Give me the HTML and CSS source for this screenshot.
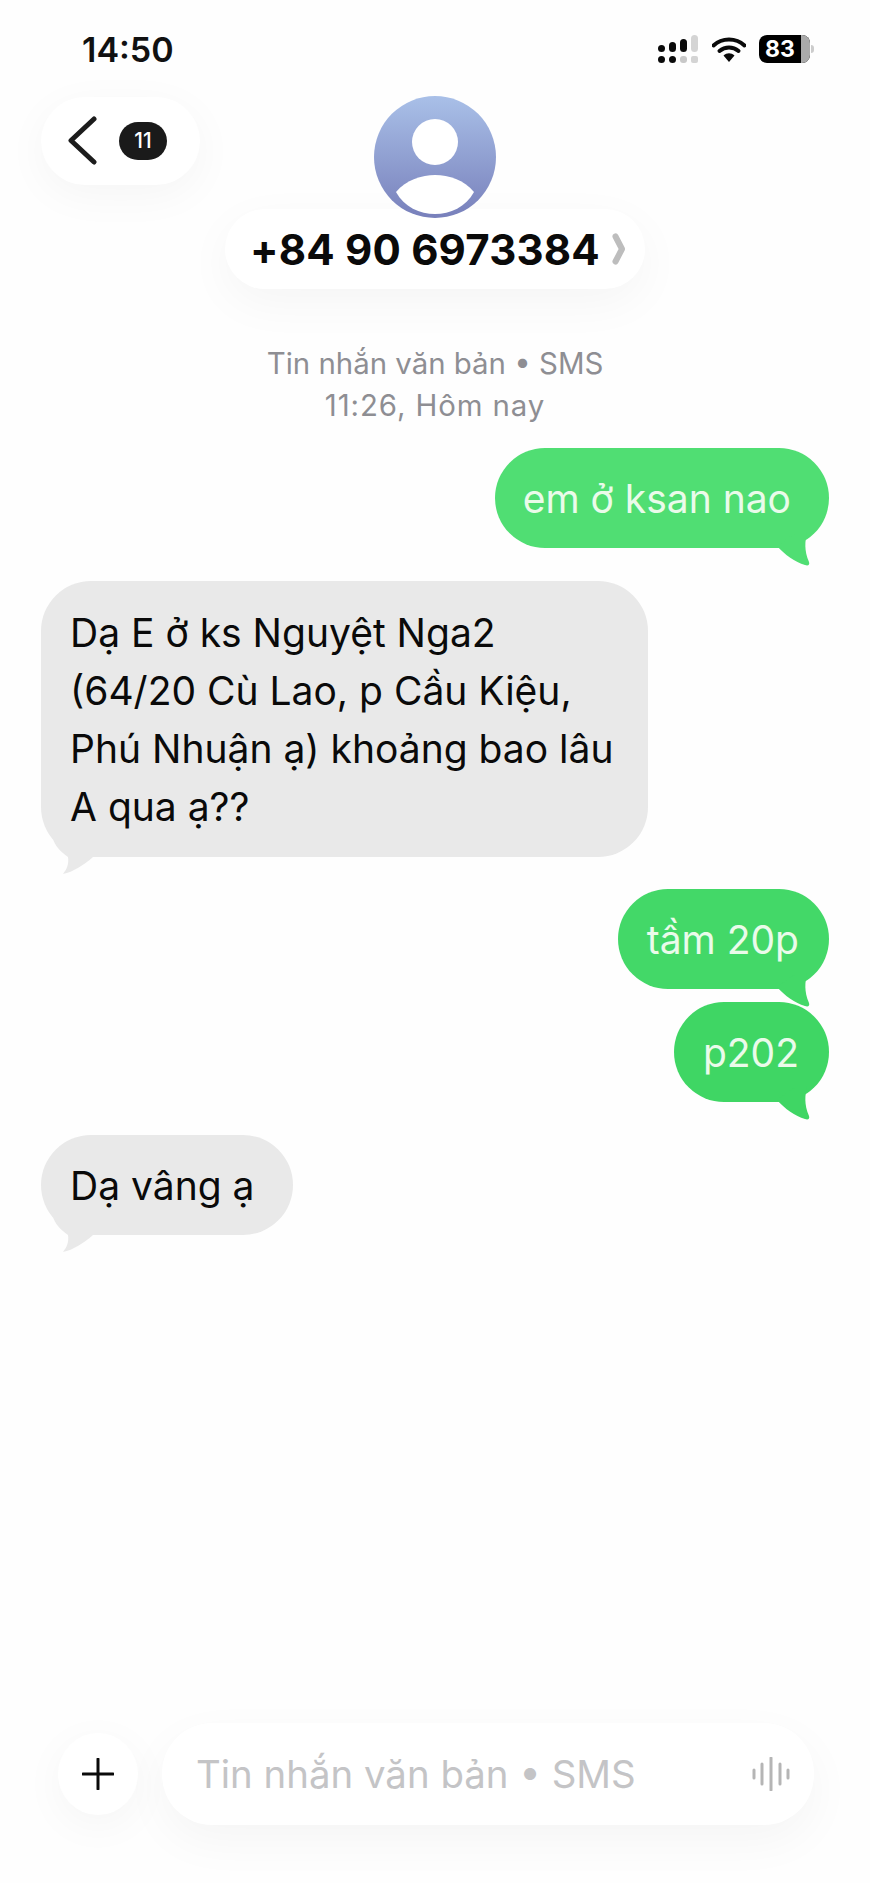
FILE: index.html
```html
<!DOCTYPE html>
<html lang="vi">

<head>
    <meta charset="UTF-8">
    <meta name="viewport" content="width=device-width, initial-scale=1.0">
    <title>Tin nhắn</title>
    <link rel="stylesheet" href="styles.css">
</head>

<body>
    <div class="statusBar">
        <span class="clock">14:50</span>
        <div class="statusIcons">
            <svg class="signal" width="42" height="28" viewBox="0 0 42 28">
                <rect x="0" y="10" width="7" height="7" rx="3.5" fill="#0a0a0a" />
                <rect x="11" y="7" width="7" height="10" rx="3.5" fill="#0a0a0a" />
                <rect x="22" y="4" width="7" height="13" rx="3.5" fill="#0a0a0a" />
                <rect x="33" y="0" width="7" height="17" rx="3.5" fill="#d4d4d4" />
                <rect x="0" y="21" width="7" height="7" rx="3.5" fill="#0a0a0a" />
                <rect x="11" y="21" width="7" height="7" rx="3.5" fill="#0a0a0a" />
                <rect x="22" y="21" width="7" height="7" rx="3" fill="#c8c8c8" />
                <rect x="33" y="21" width="7" height="7" rx="2" fill="#d4d4d4" />
            </svg>
            <svg class="wifi" width="34" height="26" viewBox="0 0 34 26">
                <path d="M1.5 9.5C10 1.5 24 1.5 32.5 9.5" fill="none" stroke="#0a0a0a" stroke-width="4" stroke-linecap="round" />
                <path d="M7.5 15C13 10.3 21 10.3 26.5 15" fill="none" stroke="#0a0a0a" stroke-width="4" stroke-linecap="round" />
                <path d="M11.5 19.5C15 16.6 19 16.6 22.5 19.5L17 26Z" fill="#0a0a0a" />
            </svg>
            <div class="battery">
                <span class="batteryLevel">83</span>
                <span class="batteryRest"></span>
            </div>
            <span class="batteryNub"></span>
        </div>
    </div>

    <div class="topBar">
        <div class="backPill">
            <svg width="30" height="50" viewBox="0 0 30 50">
                <path d="M27 3L4 24.500L27 46" fill="none" stroke="#1c1c1c" stroke-width="5" stroke-linecap="round" stroke-linejoin="round" />
            </svg>
            <span class="unread">11</span>
        </div>
        <div class="contact">
            <svg class="avatar" width="122" height="122" viewBox="0 0 122 122">
                <defs>
                    <linearGradient id="avatarFill" x1="0" y1="0" x2="0" y2="1">
                        <stop offset="0" stop-color="#a9c0e8" />
                        <stop offset="1" stop-color="#7880bb" />
                    </linearGradient>
                </defs>
                <circle cx="61" cy="61" r="61" fill="url(#avatarFill)" />
                <ellipse cx="61" cy="46" rx="23" ry="23" fill="#fff" />
                <path d="M22 96C32 84 48 79 61 79C75 79 90 84 100 96C92 111 76 118 61 118C46 118 30 111 22 96Z" fill="#fff" />
            </svg>
            <div class="namePill">
                <span class="phone">+84 90 6973384</span>
                <svg width="14" height="32" viewBox="0 0 14 32">
                    <path d="M3.500 3.500L10 16L3.500 28.500" fill="none" stroke="#bdbdbd" stroke-width="6" stroke-linecap="round" stroke-linejoin="round" />
                </svg>
            </div>
        </div>
    </div>

    <div class="threadInfo">
        <div>Tin nhắn văn bản • SMS</div>
        <div class="threadTime">11:26, Hôm nay</div>
    </div>

    <div class="messages">
        <div class="bubble sent shade1 first roomy">em ở ksan nao
            <svg class="tail" width="34" height="34" viewBox="0 0 34 34">
                <path d="M0 14L20 0L30 0C28 10 27 18 32 30C33 33 31 34 28 33C18 30 8 23 0 14Z" />
            </svg>
        </div>
        <div class="bubble received long">Dạ E ở ks Nguyệt Nga2<br>(64/20 Cù Lao, p Cầu Kiệu,<br>Phú Nhuận ạ) khoảng bao lâu<br>A qua ạ??
            <svg class="tail" width="54" height="40" viewBox="0 0 54 40">
                <path d="M12 0C14 7 20 13 27 18C28 25 26 30 22 35C32 33 43 26 52 18L30 0Z" />
            </svg>
        </div>
        <div class="bubble sent shade2">tầm 20p
            <svg class="tail" width="34" height="34" viewBox="0 0 34 34">
                <path d="M0 14L20 0L30 0C28 10 27 18 32 30C33 33 31 34 28 33C18 30 8 23 0 14Z" />
            </svg>
        </div>
        <div class="bubble sent shade3 tight">p202
            <svg class="tail" width="34" height="34" viewBox="0 0 34 34">
                <path d="M0 14L20 0L30 0C28 10 27 18 32 30C33 33 31 34 28 33C18 30 8 23 0 14Z" />
            </svg>
        </div>
        <div class="bubble received roomy">Dạ vâng ạ
            <svg class="tail" width="54" height="40" viewBox="0 0 54 40">
                <path d="M12 0C14 7 20 13 27 18C28 25 26 30 22 35C32 33 43 26 52 18L30 0Z" />
            </svg>
        </div>
    </div>

    <div class="composer">
        <div class="plusButton">
            <svg width="32" height="32" viewBox="0 0 32 32">
                <path d="M16 1V31M1 16H31" fill="none" stroke="#0a0a0a" stroke-width="3" stroke-linecap="round" />
            </svg>
        </div>
        <div class="inputPill">
            <span class="placeholder">Tin nhắn văn bản • SMS</span>
            <svg width="38" height="34" viewBox="0 0 38 34">
                <path d="M2 13V21M10 7V27M19 1V33M28 7V27M36 13V21" fill="none" stroke="#b5b5b5" stroke-width="3" stroke-linecap="round" />
            </svg>
        </div>
    </div>
</body>

</html>
```

FILE: styles.css
```css
* {
    box-sizing: border-box;
}

body {
    font-family: Inter, "Liberation Sans", sans-serif;
    width: 870px;
    height: 1883px;
    margin: 0;
    overflow: hidden;
    display: flex;
    flex-direction: column;
    background-color: #fefefe;
    color: #0a0a0a;
}

.statusBar {
    display: flex;
    justify-content: space-between;
    align-items: center;
    height: 28px;
    margin-top: 35px;
    padding: 0 56px 0 82px;
}

.clock {
    font-size: 34px;
    font-weight: 600;
    color: #111;
}

.statusIcons {
    display: flex;
    align-items: center;
}

.wifi {
    margin-left: 12px;
}

.battery {
    display: flex;
    width: 51px;
    height: 28px;
    margin-left: 13px;
    border-radius: 8px;
    overflow: hidden;
    background-color: #000;
}

.batteryLevel {
    flex: 1;
    color: #fff;
    font-size: 23px;
    font-weight: 700;
    line-height: 28px;
    text-align: center;
}

.batteryRest {
    width: 9px;
    background-color: #aaa;
}

.batteryNub {
    width: 3px;
    height: 8px;
    margin-left: 1px;
    border-radius: 0 3px 3px 0;
    background-color: #ccc;
}

.topBar {
    position: relative;
    height: 225px;
    margin-top: 33px;
}

.backPill {
    position: absolute;
    top: 1px;
    left: 41px;
    display: flex;
    align-items: center;
    gap: 22px;
    width: 159px;
    height: 88px;
    padding-left: 26px;
    border-radius: 44px;
    background-color: #fff;
    box-shadow: 0 10px 44px rgba(0, 0, 0, 0.04);
}

.unread {
    width: 48px;
    height: 38px;
    border-radius: 19px;
    background-color: #1a1a1a;
    color: #fff;
    font-size: 21px;
    font-weight: 500;
    line-height: 38px;
    text-align: center;
}

.contact {
    display: flex;
    flex-direction: column;
    align-items: center;
}

.avatar {
    position: relative;
    z-index: 2;
}

.namePill {
    display: flex;
    align-items: center;
    gap: 12px;
    width: 420px;
    height: 80px;
    margin-top: -9px;
    padding-left: 25px;
    border-radius: 40px;
    background-color: #fff;
    box-shadow: 0 14px 48px rgba(0, 0, 0, 0.04);
}

.phone {
    font-size: 42px;
    font-weight: 700;
    letter-spacing: 0.2px;
    white-space: nowrap;
}

.threadInfo {
    margin-top: 22px;
    color: #8e8e93;
    font-size: 29.4px;
    line-height: 42px;
    text-align: center;
}

.threadTime {
    letter-spacing: 0.9px;
}

.messages {
    display: flex;
    flex-direction: column;
    margin-top: 21px;
    padding: 0 41px;
}

.bubble {
    position: relative;
    padding: 22px 30px 20px 29px;
    border-radius: 50px;
    font-size: 39px;
    line-height: 58px;
    white-space: nowrap;
}

.roomy {
    padding-right: 39px;
}

.long {
    padding-top: 23px;
    padding-bottom: 21px;
    padding-right: 34px;
}

.tail {
    position: absolute;
    top: 100%;
    margin-top: -18px;
}

.sent {
    align-self: flex-end;
    margin-top: 32px;
    color: #eafbea;
}

.sent.first {
    margin-top: 0;
    padding-left: 28px;
    padding-right: 38px;
}

.sent.tight {
    margin-top: 13px;
}

.sent .tail {
    right: 18px;
    margin-top: -16px;
}

.shade1 {
    background-color: #50de73;
}

.shade1 .tail {
    fill: #50de73;
}

.shade2 {
    background-color: #43d868;
}

.shade2 .tail {
    fill: #43d868;
}

.shade3 {
    background-color: #3fd664;
}

.shade3 .tail {
    fill: #3fd664;
}

.received {
    align-self: flex-start;
    margin-top: 33px;
    background-color: #e9e9e9;
    color: #0a0a0a;
}

.received .tail {
    left: 0;
    fill: #e9e9e9;
}

.composer {
    display: flex;
    align-items: center;
    gap: 24px;
    margin-top: auto;
    margin-bottom: 58px;
    padding: 0 56px 0 58px;
}

.plusButton {
    display: flex;
    justify-content: center;
    align-items: center;
    width: 80px;
    height: 82px;
    border-radius: 50%;
    background-color: #fff;
    box-shadow: 0 10px 44px rgba(0, 0, 0, 0.04);
}

.inputPill {
    flex: 1;
    display: flex;
    justify-content: space-between;
    align-items: center;
    height: 102px;
    padding: 0 24px 0 34px;
    border-radius: 50px;
    background-color: #fff;
    box-shadow: 0 16px 48px rgba(0, 0, 0, 0.04);
}

.placeholder {
    color: #c4c4c6;
    font-size: 38.4px;
}
```
